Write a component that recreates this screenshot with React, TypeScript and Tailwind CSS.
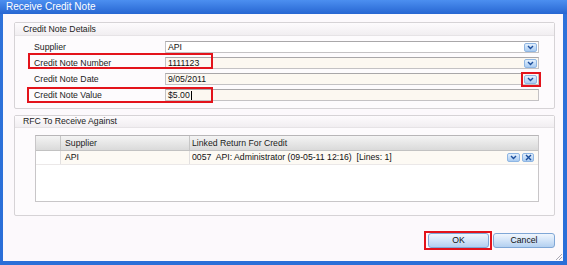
import React from 'react';

const Chevron = () => (
  <svg width="7" height="5" viewBox="0 0 7 5">
    <polyline points="1,1 3.5,3.5 6,1" fill="none" stroke="#1d4f9c" strokeWidth="1.4" />
  </svg>
);

const Cross = () => (
  <svg width="7" height="7" viewBox="0 0 7 7">
    <path d="M1 1 L6 6 M6 1 L1 6" stroke="#1d4f9c" strokeWidth="1.4" />
  </svg>
);

const DropBtn = () => (
  <div className="w-[13px] h-[9px] flex items-center justify-center rounded-[2px] border border-[#8fb6e3] bg-gradient-to-b from-[#e4f0fc] to-[#a9cbf1]">
    <Chevron />
  </div>
);

interface FieldRowProps {
  label: string;
  value?: string;
  cream?: boolean;
  dropdown?: boolean;
  caret?: boolean;
}

const FieldRow: React.FC<FieldRowProps> = ({ label, value = '', cream = true, dropdown = false, caret = false }) => (
  <div className="flex items-center h-[12px]">
    <div className="w-[132px] pl-[1px] text-[#1c1c1c]">{label}</div>
    <div
      className={`flex-1 h-[12px] flex items-center pl-[2px] pr-[1px] border border-[#c4c2c4] border-t-[#a9a7a9] ${
        cream ? 'bg-[#fcf8f1]' : 'bg-white'
      }`}
    >
      <span className="flex-1 flex items-center text-[#111]">
        {value}
        {caret && <span className="ml-[1px] w-px h-[9px] bg-black" />}
      </span>
      {dropdown && <DropBtn />}
    </div>
  </div>
);

const GroupHeader: React.FC<{ title: string; h: string }> = ({ title, h }) => (
  <div
    className={`${h} flex items-center pl-[8px] border-b border-[#e6e3e6] bg-gradient-to-b from-[#fdfbfd] to-[#f1eef1] text-[#1c1c1c]`}
  >
    {title}
  </div>
);

const Button: React.FC<{ label: string; w: string }> = ({ label, w }) => (
  <div
    className={`${w} h-[15px] flex items-center justify-center rounded-[3px] border border-[#7fa7d6] bg-gradient-to-b from-[#f0f6fd] via-[#d2e4f8] to-[#b3d0f0] text-[#111]`}
  >
    {label}
  </div>
);

export default function App() {
  return (
    <div className="relative w-[567px] h-[265px] flex flex-col bg-gradient-to-b from-[#2f72da] to-[#2a6fd8] font-['Liberation_Sans',Arial,sans-serif] text-[8.7px] leading-none">
      {/* Title bar */}
      <div className="h-[14px] flex items-center pl-[6px] text-white text-[10px] bg-gradient-to-b from-[#4c8ff0] to-[#2766d2]">
        Receive Credit Note
      </div>

      {/* Client area */}
      <div className="flex-1 ml-[3px] mr-[4px] mb-[4px] bg-[#fcf9fc] flex flex-col pt-[8px] pl-[11px] pr-[8px]">
        {/* Credit Note Details */}
        <div className="h-[87px] flex flex-col border border-[#d6d3d6] rounded-[2px] bg-[#fdfbfd]">
          <GroupHeader title="Credit Note Details" h="h-[13px]" />
          <div className="flex flex-col gap-[4px] pt-[5px] pl-[18px] pr-[15px]">
            <FieldRow label="Supplier" value="API" cream={false} dropdown />
            <FieldRow label="Credit Note Number" value="1111123" dropdown />
            <FieldRow label="Credit Note Date" value="9/05/2011" dropdown />
            <FieldRow label="Credit Note Value" value="$5.00" caret />
          </div>
        </div>

        {/* RFC To Receive Against */}
        <div className="mt-[6px] h-[101px] flex flex-col border border-[#d6d3d6] rounded-[2px] bg-[#fdfbfd]">
          <GroupHeader title="RFC To Receive Against" h="h-[12px]" />
          <div className="pt-[7px] pl-[20px] pr-[15px]">
            <div className="h-[67px] flex flex-col border border-[#c8c6c8] border-t-[#b8b6b8] bg-white">
              <div className="h-[15px] flex border-b border-[#c2c2c2] bg-gradient-to-b from-[#f4f4f4] to-[#dadada] text-[#1c1c1c]">
                <div className="w-[25px] border-r border-[#c6c6c6]" />
                <div className="w-[129px] flex items-center pl-[4px] border-r border-[#c6c6c6]">Supplier</div>
                <div className="flex-1 flex items-center pl-[2px]">Linked Return For Credit</div>
              </div>
              <div className="h-[14px] flex border-b border-[#ebe8e8] bg-[#fdfaf4] text-[#111]">
                <div className="w-[25px] border-r border-[#e2e0e0] bg-white" />
                <div className="w-[129px] flex items-center pl-[4px] border-r border-[#e2e0e0]">API</div>
                <div className="flex-1 flex items-center pl-[2px] pr-[4px]">
                  <span className="flex-1 whitespace-pre">0057  API: Administrator (09-05-11 12:16)  [Lines: 1]</span>
                  <div className="flex gap-[2px]">
                    <DropBtn />
                    <div className="w-[12px] h-[9px] flex items-center justify-center rounded-[2px] border border-[#8fb6e3] bg-gradient-to-b from-[#e4f0fc] to-[#a9cbf1]">
                      <Cross />
                    </div>
                  </div>
                </div>
              </div>
            </div>
          </div>
        </div>

        {/* Buttons */}
        <div className="mt-[17px] flex justify-end gap-[4px]">
          <Button label="OK" w="w-[61px]" />
          <Button label="Cancel" w="w-[62px]" />
        </div>
      </div>

      {/* Red annotation boxes */}
      <div className="absolute left-[28px] top-[53px] w-[185px] h-[16px] border-2 border-[#e3131b]" />
      <div className="absolute left-[27px] top-[87px] w-[186px] h-[16px] border-2 border-[#e3131b]" />
      <div className="absolute left-[521px] top-[72px] w-[20px] h-[15px] border-2 border-[#e3131b]" />
      <div className="absolute left-[424px] top-[231px] w-[68px] h-[19px] border-2 border-[#e3131b]" />

      {/* Resize grip */}
      <svg className="absolute left-[554px] top-[252px]" width="9" height="9" viewBox="0 0 9 9">
        <path d="M8 2 L2 8 M8 5 L5 8 M8 8 L8 8" stroke="#a9a9b3" strokeWidth="1" />
      </svg>
    </div>
  );
}
